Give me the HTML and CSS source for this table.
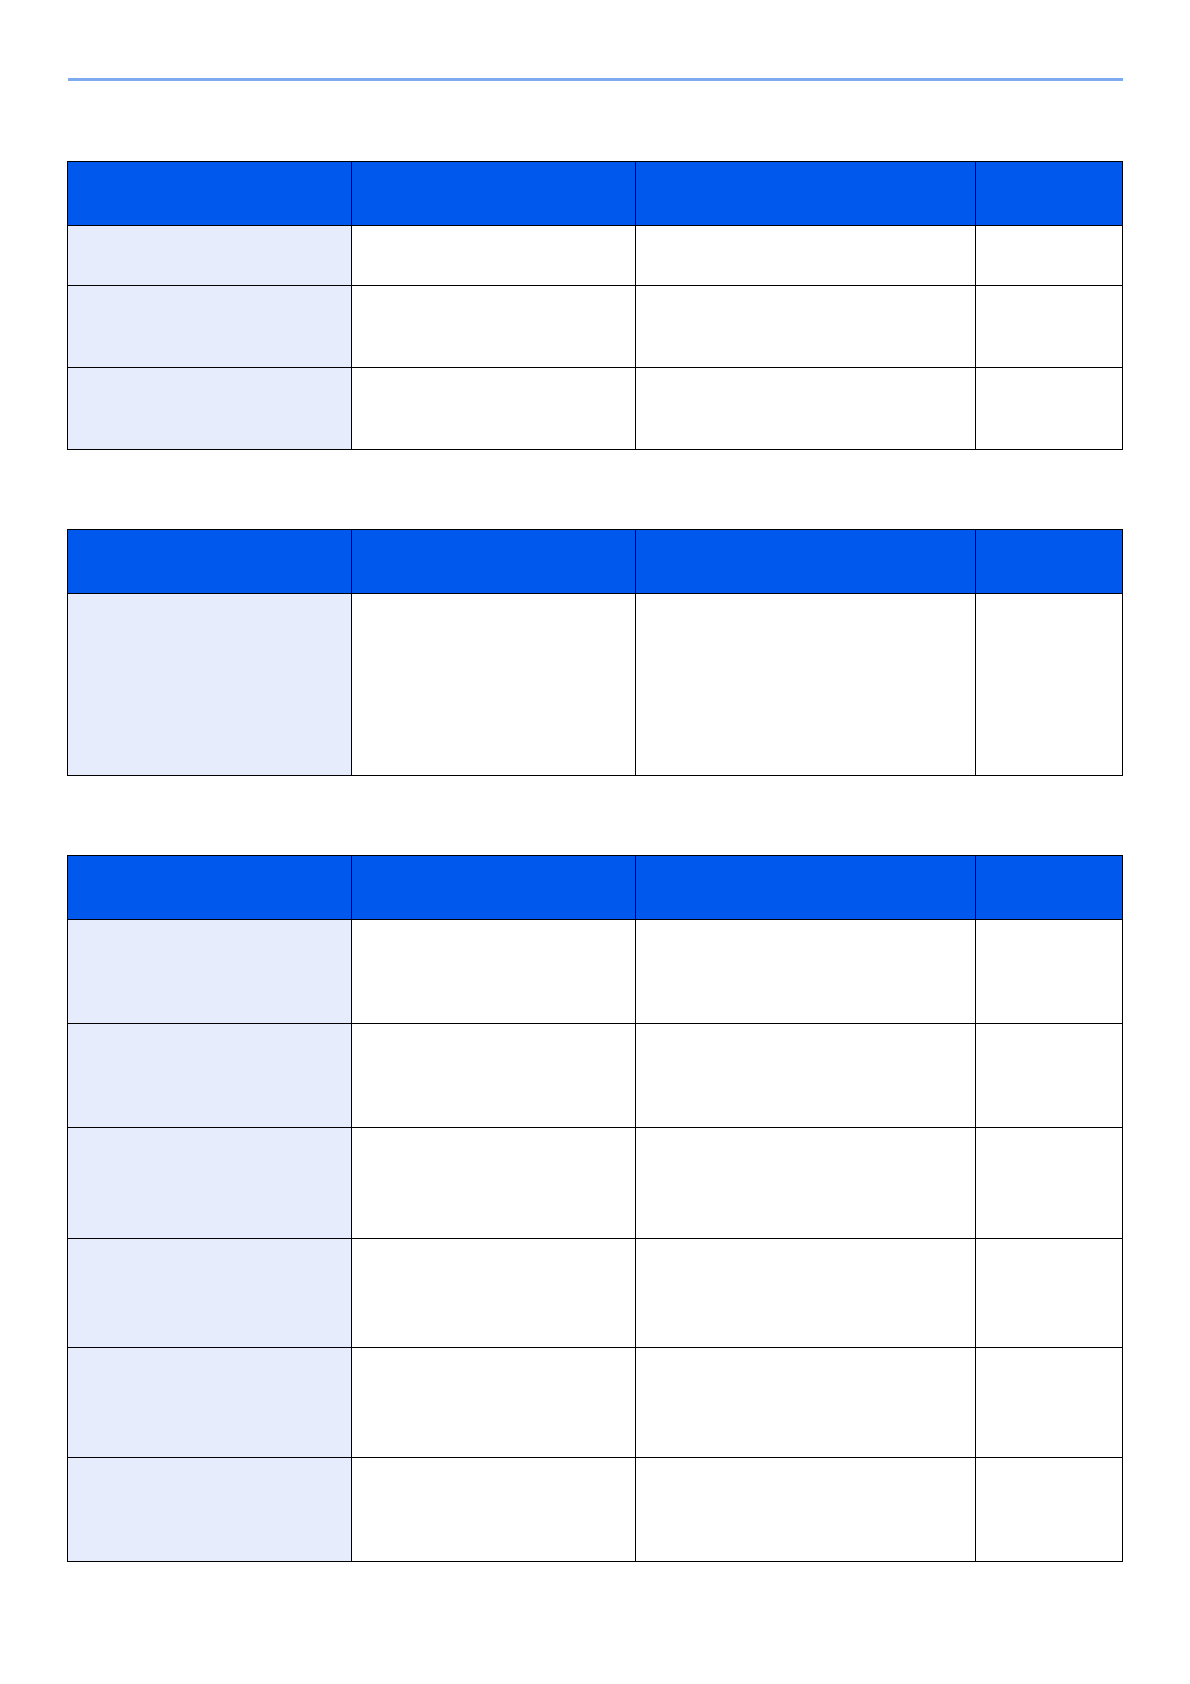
FILE: index.html
```html
<!DOCTYPE html>
<html lang="en">
<head>
<meta charset="utf-8">
<title>Tables</title>
<link rel="stylesheet" href="styles.css">
</head>
<body>
<div class="page">
  <div class="rule"></div>

  <table class="grid t1">
    <colgroup><col class="c1"><col class="c2"><col class="c3"><col class="c4"></colgroup>
    <thead>
      <tr class="h-head"><th></th><th></th><th></th><th></th></tr>
    </thead>
    <tbody>
      <tr class="h59"><td class="key"></td><td></td><td></td><td></td></tr>
      <tr class="h81"><td class="key"></td><td></td><td></td><td></td></tr>
      <tr class="h81"><td class="key"></td><td></td><td></td><td></td></tr>
    </tbody>
  </table>

  <table class="grid t2">
    <colgroup><col class="c1"><col class="c2"><col class="c3"><col class="c4"></colgroup>
    <thead>
      <tr class="h-head"><th></th><th></th><th></th><th></th></tr>
    </thead>
    <tbody>
      <tr class="h181"><td class="key"></td><td></td><td></td><td></td></tr>
    </tbody>
  </table>

  <table class="grid t3">
    <colgroup><col class="c1"><col class="c2"><col class="c3"><col class="c4"></colgroup>
    <thead>
      <tr class="h-head"><th></th><th></th><th></th><th></th></tr>
    </thead>
    <tbody>
      <tr class="h103"><td class="key"></td><td></td><td></td><td></td></tr>
      <tr class="h103"><td class="key"></td><td></td><td></td><td></td></tr>
      <tr class="h110"><td class="key"></td><td></td><td></td><td></td></tr>
      <tr class="h108"><td class="key"></td><td></td><td></td><td></td></tr>
      <tr class="h109"><td class="key"></td><td></td><td></td><td></td></tr>
      <tr class="h103"><td class="key"></td><td></td><td></td><td></td></tr>
    </tbody>
  </table>
</div>
</body>
</html>
```

FILE: styles.css
```css
html, body {
  margin: 0;
  padding: 0;
  background: #ffffff;
  font-family: "Liberation Sans", Arial, sans-serif;
}

.page {
  padding: 78px 0 0 67px;
  width: 1056px;
}

.rule {
  height: 3px;
  width: 1055px;
  margin-left: 1px;
  background: #7eaaf0;
}

.grid {
  border-collapse: separate;
  border-spacing: 1px;
  background: #000000;
  table-layout: fixed;
  width: 1056px;
  empty-cells: show;
}

.t1 { margin-top: 80px; }
.t2 { margin-top: 79px; }
.t3 { margin-top: 79px; }

.c1 { width: 283px; }
.c2 { width: 283px; }
.c3 { width: 339px; }
.c4 { width: 146px; }

.grid th,
.grid td {
  padding: 0;
  background: #ffffff;
}

.grid th {
  background: #0058ec;
}

.grid td.key {
  background: #e6ecfb;
}

.h-head th { height: 63px; }
.h59 td { height: 59px; }
.h81 td { height: 81px; }
.h103 td { height: 103px; }
.h108 td { height: 108px; }
.h109 td { height: 109px; }
.h110 td { height: 110px; }
.h181 td { height: 181px; }
```
